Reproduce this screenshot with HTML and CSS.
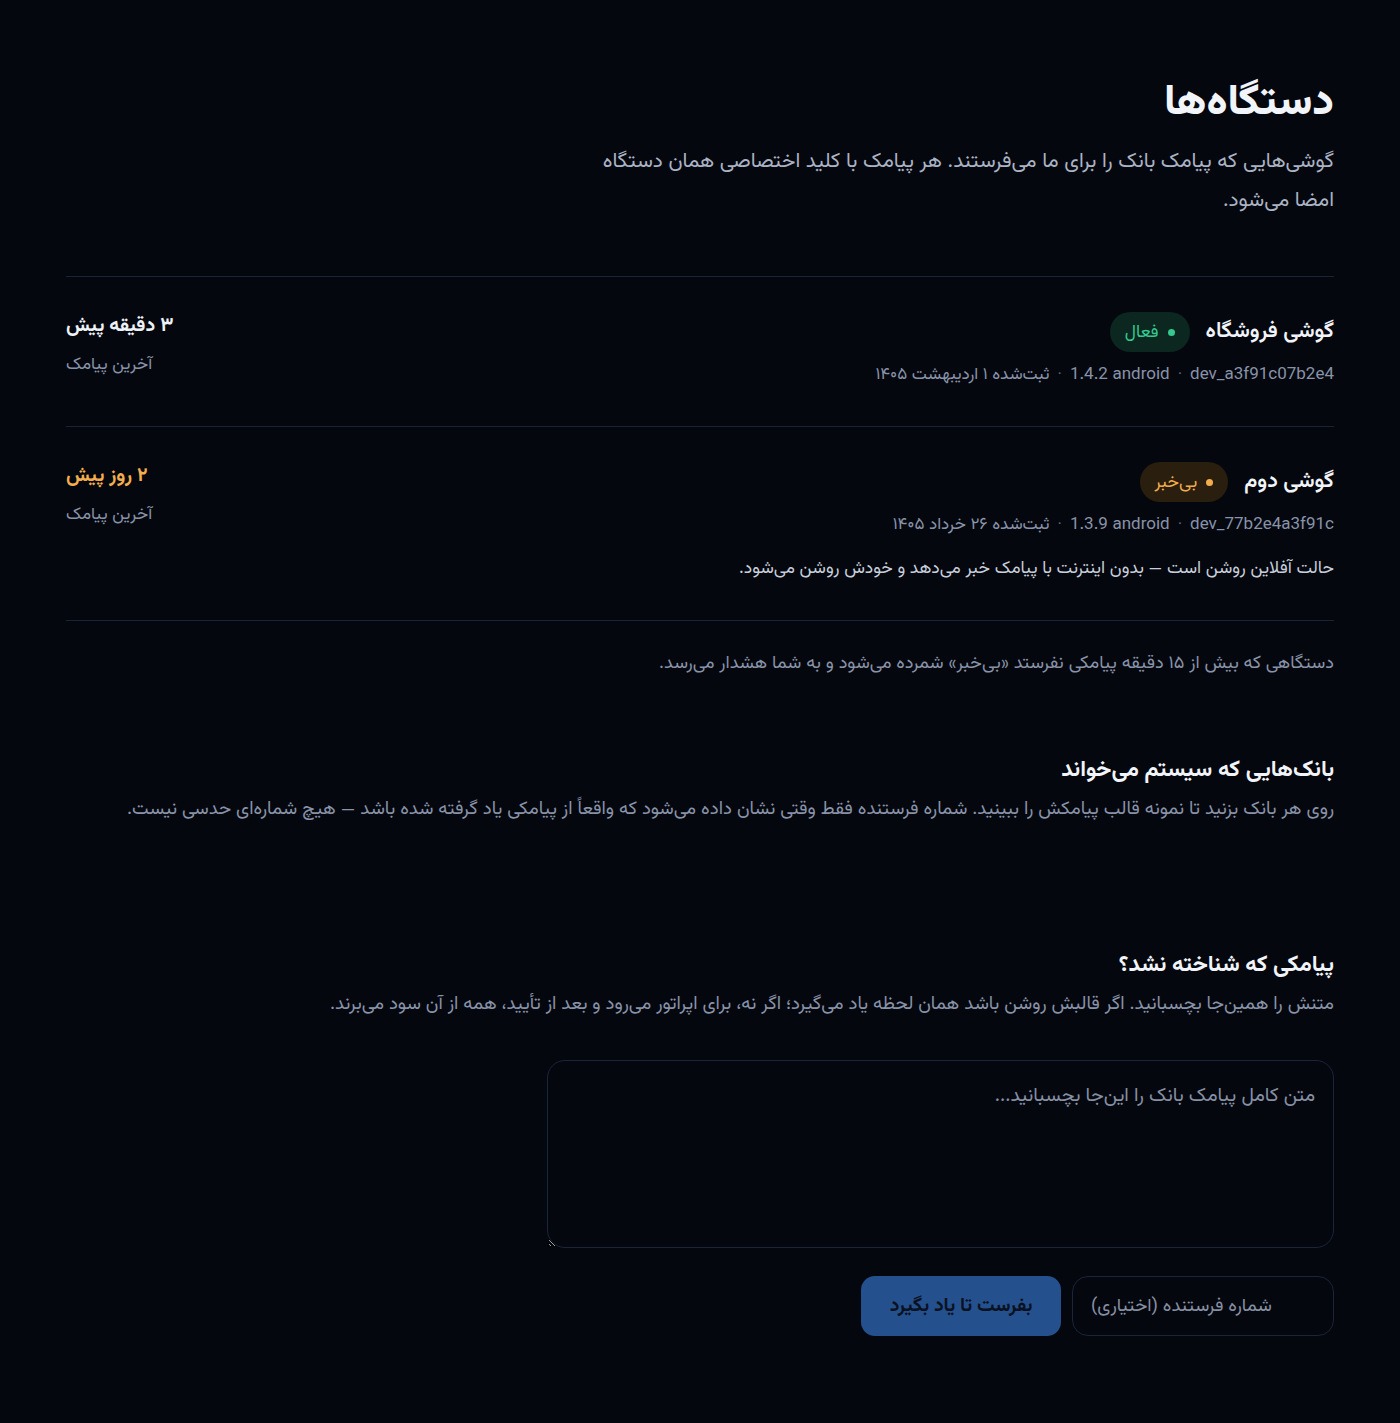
FILE: index.html
```html
<!DOCTYPE html>
<html lang="fa" dir="rtl">
<head>
<meta charset="utf-8">
<title>دستگاه‌ها</title>
<link rel="stylesheet" href="styles.css">
</head>
<body>
<main class="page">
  <header class="head">
    <h1 class="title">دستگاه‌ها</h1>
    <p class="lead">گوشی‌هایی که پیامک بانک را برای ما می‌فرستند. هر پیامک با کلید اختصاصی همان دستگاه امضا می‌شود.</p>
  </header>

  <ul class="devices">
    <li class="device">
      <div class="device-main">
        <div class="device-top">
          <span class="device-name">گوشی فروشگاه</span>
          <span class="badge badge-ok"><span class="dot"></span>فعال</span>
        </div>
        <div class="meta">
          <bdi class="latin">dev_a3f91c07b2e4</bdi>
          <span class="sep">·</span>
          <span class="latin"><bdi>android</bdi> <bdi>1.4.2</bdi></span>
          <span class="sep">·</span>
          <span>ثبت‌شده ۱ اردیبهشت ۱۴۰۵</span>
        </div>
      </div>
      <div class="device-side">
        <div class="last">۳ دقیقه پیش</div>
        <div class="last-label">آخرین پیامک</div>
      </div>
    </li>
    <li class="device">
      <div class="device-main">
        <div class="device-top">
          <span class="device-name">گوشی دوم</span>
          <span class="badge badge-warn"><span class="dot"></span>بی‌خبر</span>
        </div>
        <div class="meta">
          <bdi class="latin">dev_77b2e4a3f91c</bdi>
          <span class="sep">·</span>
          <span class="latin"><bdi>android</bdi> <bdi>1.3.9</bdi></span>
          <span class="sep">·</span>
          <span>ثبت‌شده ۲۶ خرداد ۱۴۰۵</span>
        </div>
        <p class="note">حالت آفلاین روشن است — بدون اینترنت با پیامک خبر می‌دهد و خودش روشن می‌شود.</p>
      </div>
      <div class="device-side">
        <div class="last last-warn">۲ روز پیش</div>
        <div class="last-label">آخرین پیامک</div>
      </div>
    </li>
  </ul>

  <p class="footnote">دستگاهی که بیش از ۱۵ دقیقه پیامکی نفرستد «بی‌خبر» شمرده می‌شود و به شما هشدار می‌رسد.</p>

  <section class="section">
    <h2 class="section-title">بانک‌هایی که سیستم می‌خواند</h2>
    <p class="section-desc">روی هر بانک بزنید تا نمونه قالب پیامکش را ببینید. شماره فرستنده فقط وقتی نشان داده می‌شود که واقعاً از پیامکی یاد گرفته شده باشد — هیچ شماره‌ای حدسی نیست.</p>
    <div class="banks"></div>
  </section>

  <section class="section">
    <h2 class="section-title">پیامکی که شناخته نشد؟</h2>
    <p class="section-desc">متنش را همین‌جا بچسبانید. اگر قالبش روشن باشد همان لحظه یاد می‌گیرد؛ اگر نه، برای اپراتور می‌رود و بعد از تأیید، همه از آن سود می‌برند.</p>
    <form class="learn">
      <textarea class="sms" placeholder="متن کامل پیامک بانک را این‌جا بچسبانید..."></textarea>
      <div class="learn-row">
        <input class="sender" type="text" dir="ltr" placeholder="شماره فرستنده (اختیاری)">
        <button class="submit" type="button">بفرست تا یاد بگیرد</button>
      </div>
    </form>
  </section>
</main>
</body>
</html>
```

FILE: styles.css
```css
* { box-sizing: border-box; }
html, body { margin: 0; padding: 0; }
body {
  background: #05070f;
  color: #e8ecf3;
  font-family: "Vazirmatn", "Roboto", "Noto Sans Arabic", "DejaVu Sans", sans-serif;
  min-height: 1423px;
}
.page {
  max-width: 1268px;
  margin: 0 auto;
  padding: 80px 0 80px;
  direction: rtl;
}
.title {
  margin: 0;
  font-size: 43px;
  line-height: 47px;
  font-weight: 800;
  color: #f1f4f9;
}
.lead {
  margin: 16px 0 0;
  max-width: 760px;
  font-size: 20.8px;
  line-height: 39px;
  color: #aab3c3;
}
.devices {
  list-style: none;
  margin: 55px 0 0;
  padding: 0;
  border-top: 1px solid #1a2233;
}
.device {
  display: flex;
  justify-content: space-between;
  align-items: flex-start;
  padding: 35px 0 39px;
  border-bottom: 1px solid #1a2233;
}
.device-main { display: flex; flex-direction: column; }
.device-top {
  display: flex;
  align-items: center;
  gap: 16px;
  height: 40px;
}
.device-name {
  font-size: 21.5px;
  font-weight: 600;
  color: #f1f4f9;
}
.badge {
  display: inline-flex;
  align-items: center;
  gap: 9px;
  height: 40px;
  padding: 0 15px;
  border-radius: 20px;
  font-size: 17.5px;
}
.dot { width: 7px; height: 7px; border-radius: 50%; background: currentColor; }
.badge-ok { background: #0c2620; color: #34c98e; }
.badge-warn { background: #2a1e0e; color: #f2ad4e; }
.meta {
  display: flex;
  align-items: center;
  gap: 8px;
  margin-top: 11px;
  font-size: 17px;
  line-height: 24px;
  color: #8893a8;
}
.latin { font-size: 17px; }
.sep { color: #5d6779; }
.note {
  margin: 20px 0 0;
  font-size: 17.5px;
  line-height: 24px;
  color: #c8cfdb;
}
.device-side {
  display: flex;
  flex-direction: column;
  align-items: flex-end;
  gap: 14px;
}
.last {
  font-size: 19.5px;
  line-height: 28px;
  font-weight: 700;
  color: #eef1f6;
}
.last-warn { color: #f2ad4e; }
.last-label {
  font-size: 17px;
  line-height: 22px;
  color: #8893a8;
}
.footnote {
  margin: 31px 0 0;
  font-size: 18.1px;
  line-height: 24px;
  color: #8893a8;
}
.section { margin-top: 79px; }
.section-title {
  margin: 0;
  font-size: 22.5px;
  line-height: 32px;
  font-weight: 700;
  color: #f1f4f9;
}
.section-desc {
  margin: 10px 0 0;
  font-size: 18.6px;
  line-height: 26px;
  color: #8893a8;
}
.banks { min-height: 48px; }
.learn {
  width: 787px;
  margin-top: 42px;
  display: flex;
  flex-direction: column;
  gap: 28px;
}
.sms {
  width: 100%;
  height: 188px;
  background: #05070f;
  border: 1px solid #1b2538;
  border-radius: 18px;
  padding: 22px 18px;
  font: inherit;
  font-size: 19.4px;
  line-height: 26px;
  color: #e8ecf3;
  direction: rtl;
}
.sms::placeholder, .sender::placeholder { color: #8590a3; }
.learn-row { display: flex; gap: 11px; }
.sender {
  width: 262px;
  height: 60px;
  background: #05070f;
  border: 1px solid #1b2538;
  border-radius: 16px;
  padding: 0 18px;
  font: inherit;
  font-size: 18.5px;
  color: #e8ecf3;
}
.submit {
  width: 200px;
  height: 60px;
  border: 0;
  border-radius: 14px;
  background: #25508e;
  color: #0a1222;
  font: inherit;
  font-size: 19.4px;
  font-weight: 700;
}
```
